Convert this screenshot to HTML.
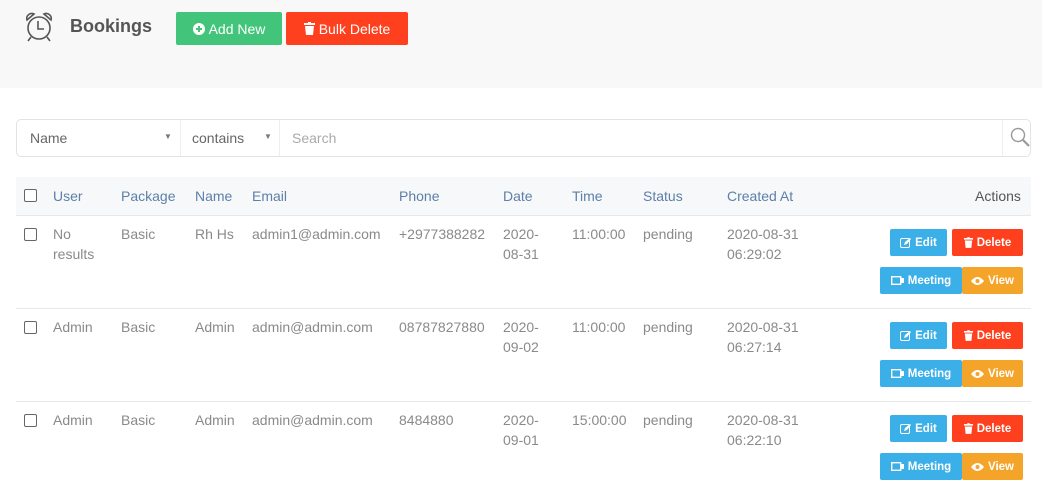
<!DOCTYPE html>
<html><head><meta charset="utf-8"><style>
*{margin:0;padding:0;box-sizing:border-box}
body{width:1042px;height:485px;overflow:hidden;background:#fff;font-family:"Liberation Sans",sans-serif;position:relative}
.top{position:absolute;left:0;top:0;width:1042px;height:88px;background:#f8f8f8}
.a{position:absolute;white-space:nowrap}
.btn{position:absolute;color:#fff;font-size:14px;border-radius:2px;display:flex;align-items:center;justify-content:center;gap:4px}
.sm{font-size:11.5px;font-weight:bold;border-radius:2px}
.g{background:#42c57a}.r{background:#ff401f}.b{background:#3aafe8}.o{background:#f5a42a}
.hd{color:#5d7fa8;font-size:14px}
.td{color:#8a8a8a;font-size:14px;line-height:20px}
.cb{position:absolute;width:13px;height:13px;border:1px solid #666;border-radius:2px;background:#fff}
.line{position:absolute;left:16px;width:1015px;height:1px;background:#e6e9ec}
</style></head><body>
<div class="top"></div>
<svg class="a" style="left:22px;top:10px" width="34" height="33" viewBox="0 0 34 33" fill="none" stroke="#555" stroke-width="1.6">
<circle cx="17" cy="18" r="11"/><path d="M16 11v8h6"/><path d="M5 10a5 5 0 0 1 7-6z"/><path d="M29 10a5 5 0 0 0-7-6z"/><path d="M9 27l-3 4M25 27l3 4"/>
</svg>
<div class="a" style="left:70px;top:16px;font-size:18px;font-weight:bold;color:#555">Bookings</div>
<div class="btn g" style="left:176px;top:12px;width:106px;height:33px"><svg width="12" height="12" viewBox="0 0 12 12"><circle cx="6" cy="6" r="6" fill="#fff"/><path d="M3 6h6M6 3v6" stroke="#42c57a" stroke-width="2"/></svg>Add New</div>
<div class="btn r" style="left:286px;top:12px;width:122px;height:33px"><svg width="11" height="13" viewBox="0 0 11 13" fill="#fff"><rect x="0" y="1" width="11" height="2"/><rect x="4" y="0" width="3" height="2"/><path d="M1 4h9l-1 9H2z"/></svg>Bulk Delete</div>

<div class="a" style="left:16px;top:119px;width:1015px;height:38px;border:1px solid #e3e3e3;border-radius:5px"></div>
<div class="a" style="left:180px;top:120px;width:1px;height:36px;background:#eee"></div>
<div class="a" style="left:279px;top:120px;width:1px;height:36px;background:#eee"></div>
<div class="a" style="left:1002px;top:120px;width:1px;height:36px;background:#eee"></div>
<div class="a td" style="left:30px;top:128px;color:#666">Name</div>
<div class="a" style="left:164px;top:132px;font-size:8px;color:#777">▼</div>
<div class="a td" style="left:192px;top:128px;color:#666">contains</div>
<div class="a" style="left:264px;top:132px;font-size:8px;color:#777">▼</div>
<div class="a td" style="left:292px;top:128px;color:#aaa">Search</div>
<svg class="a" style="left:1010px;top:127px" width="20" height="20" viewBox="0 0 20 20" fill="none" stroke="#999" stroke-width="1.4"><circle cx="8" cy="8" r="6.5"/><path d="M13 13l6 6" stroke-width="2.2"/></svg>

<div class="a" style="left:16px;top:177px;width:1015px;height:38px;background:#f6f8fa"></div>
<div class="line" style="top:215px"></div>
<div class="cb" style="left:24px;top:189px"></div>
<div class="a hd" style="left:53px;top:188px">User</div>
<div class="a hd" style="left:121px;top:188px">Package</div>
<div class="a hd" style="left:195px;top:188px">Name</div>
<div class="a hd" style="left:252px;top:188px">Email</div>
<div class="a hd" style="left:399px;top:188px">Phone</div>
<div class="a hd" style="left:503px;top:188px">Date</div>
<div class="a hd" style="left:572px;top:188px">Time</div>
<div class="a hd" style="left:643px;top:188px">Status</div>
<div class="a hd" style="left:727px;top:188px">Created At</div>
<div class="a hd" style="left:975px;top:188px;color:#555">Actions</div>

<!-- row 1 -->
<div class="cb" style="left:24px;top:228px"></div>
<div class="a td" style="left:53px;top:224px">No<br>results</div>
<div class="a td" style="left:121px;top:224px">Basic</div>
<div class="a td" style="left:195px;top:224px">Rh Hs</div>
<div class="a td" style="left:252px;top:224px">admin1@admin.com</div>
<div class="a td" style="left:399px;top:224px">+2977388282</div>
<div class="a td" style="left:503px;top:224px">2020-<br>08-31</div>
<div class="a td" style="left:572px;top:224px">11:00:00</div>
<div class="a td" style="left:643px;top:224px">pending</div>
<div class="a td" style="left:727px;top:224px">2020-08-31<br>06:29:02</div>
<div class="btn b sm" style="left:890px;top:229px;width:57px;height:27px"><svg width="11" height="10" viewBox="0 0 11 10"><rect x="0.5" y="0.5" width="9" height="9" rx="1.5" fill="none" stroke="#fff"/><path d="M4 7l1-3 5-4 1 1-4 5z" fill="#fff"/></svg>Edit</div>
<div class="btn r sm" style="left:952px;top:229px;width:71px;height:27px"><svg width="9" height="11" viewBox="0 0 11 13" fill="#fff"><rect x="0" y="1" width="11" height="2"/><rect x="4" y="0" width="3" height="2"/><path d="M1 4h9l-1 9H2z"/></svg>Delete</div>
<div class="btn b sm" style="left:880px;top:267px;width:82px;height:27px"><svg width="13" height="9" viewBox="0 0 13 9"><rect x="0.7" y="0.7" width="9" height="7.6" fill="none" stroke="#fff" stroke-width="1.4"/><rect x="10" y="2" width="3" height="5" fill="#fff"/></svg>Meeting</div>
<div class="btn o sm" style="left:962px;top:267px;width:61px;height:27px"><svg width="13" height="8" viewBox="0 0 13 8"><path d="M0 4q6.5-8 13 0q-6.5 8-13 0z" fill="#fff"/><circle cx="6.5" cy="4" r="2" fill="#f5a42a"/></svg>View</div>
<div class="line" style="top:308px"></div>

<!-- row 2 -->
<div class="cb" style="left:24px;top:321px"></div>
<div class="a td" style="left:53px;top:317px">Admin</div>
<div class="a td" style="left:121px;top:317px">Basic</div>
<div class="a td" style="left:195px;top:317px">Admin</div>
<div class="a td" style="left:252px;top:317px">admin@admin.com</div>
<div class="a td" style="left:399px;top:317px">08787827880</div>
<div class="a td" style="left:503px;top:317px">2020-<br>09-02</div>
<div class="a td" style="left:572px;top:317px">11:00:00</div>
<div class="a td" style="left:643px;top:317px">pending</div>
<div class="a td" style="left:727px;top:317px">2020-08-31<br>06:27:14</div>
<div class="btn b sm" style="left:890px;top:322px;width:57px;height:27px"><svg width="11" height="10" viewBox="0 0 11 10"><rect x="0.5" y="0.5" width="9" height="9" rx="1.5" fill="none" stroke="#fff"/><path d="M4 7l1-3 5-4 1 1-4 5z" fill="#fff"/></svg>Edit</div>
<div class="btn r sm" style="left:952px;top:322px;width:71px;height:27px"><svg width="9" height="11" viewBox="0 0 11 13" fill="#fff"><rect x="0" y="1" width="11" height="2"/><rect x="4" y="0" width="3" height="2"/><path d="M1 4h9l-1 9H2z"/></svg>Delete</div>
<div class="btn b sm" style="left:880px;top:360px;width:82px;height:27px"><svg width="13" height="9" viewBox="0 0 13 9"><rect x="0.7" y="0.7" width="9" height="7.6" fill="none" stroke="#fff" stroke-width="1.4"/><rect x="10" y="2" width="3" height="5" fill="#fff"/></svg>Meeting</div>
<div class="btn o sm" style="left:962px;top:360px;width:61px;height:27px"><svg width="13" height="8" viewBox="0 0 13 8"><path d="M0 4q6.5-8 13 0q-6.5 8-13 0z" fill="#fff"/><circle cx="6.5" cy="4" r="2" fill="#f5a42a"/></svg>View</div>
<div class="line" style="top:401px"></div>

<!-- row 3 -->
<div class="cb" style="left:24px;top:414px"></div>
<div class="a td" style="left:53px;top:410px">Admin</div>
<div class="a td" style="left:121px;top:410px">Basic</div>
<div class="a td" style="left:195px;top:410px">Admin</div>
<div class="a td" style="left:252px;top:410px">admin@admin.com</div>
<div class="a td" style="left:399px;top:410px">8484880</div>
<div class="a td" style="left:503px;top:410px">2020-<br>09-01</div>
<div class="a td" style="left:572px;top:410px">15:00:00</div>
<div class="a td" style="left:643px;top:410px">pending</div>
<div class="a td" style="left:727px;top:410px">2020-08-31<br>06:22:10</div>
<div class="btn b sm" style="left:890px;top:415px;width:57px;height:27px"><svg width="11" height="10" viewBox="0 0 11 10"><rect x="0.5" y="0.5" width="9" height="9" rx="1.5" fill="none" stroke="#fff"/><path d="M4 7l1-3 5-4 1 1-4 5z" fill="#fff"/></svg>Edit</div>
<div class="btn r sm" style="left:952px;top:415px;width:71px;height:27px"><svg width="9" height="11" viewBox="0 0 11 13" fill="#fff"><rect x="0" y="1" width="11" height="2"/><rect x="4" y="0" width="3" height="2"/><path d="M1 4h9l-1 9H2z"/></svg>Delete</div>
<div class="btn b sm" style="left:880px;top:453px;width:82px;height:27px"><svg width="13" height="9" viewBox="0 0 13 9"><rect x="0.7" y="0.7" width="9" height="7.6" fill="none" stroke="#fff" stroke-width="1.4"/><rect x="10" y="2" width="3" height="5" fill="#fff"/></svg>Meeting</div>
<div class="btn o sm" style="left:962px;top:453px;width:61px;height:27px"><svg width="13" height="8" viewBox="0 0 13 8"><path d="M0 4q6.5-8 13 0q-6.5 8-13 0z" fill="#fff"/><circle cx="6.5" cy="4" r="2" fill="#f5a42a"/></svg>View</div>
</body></html>
